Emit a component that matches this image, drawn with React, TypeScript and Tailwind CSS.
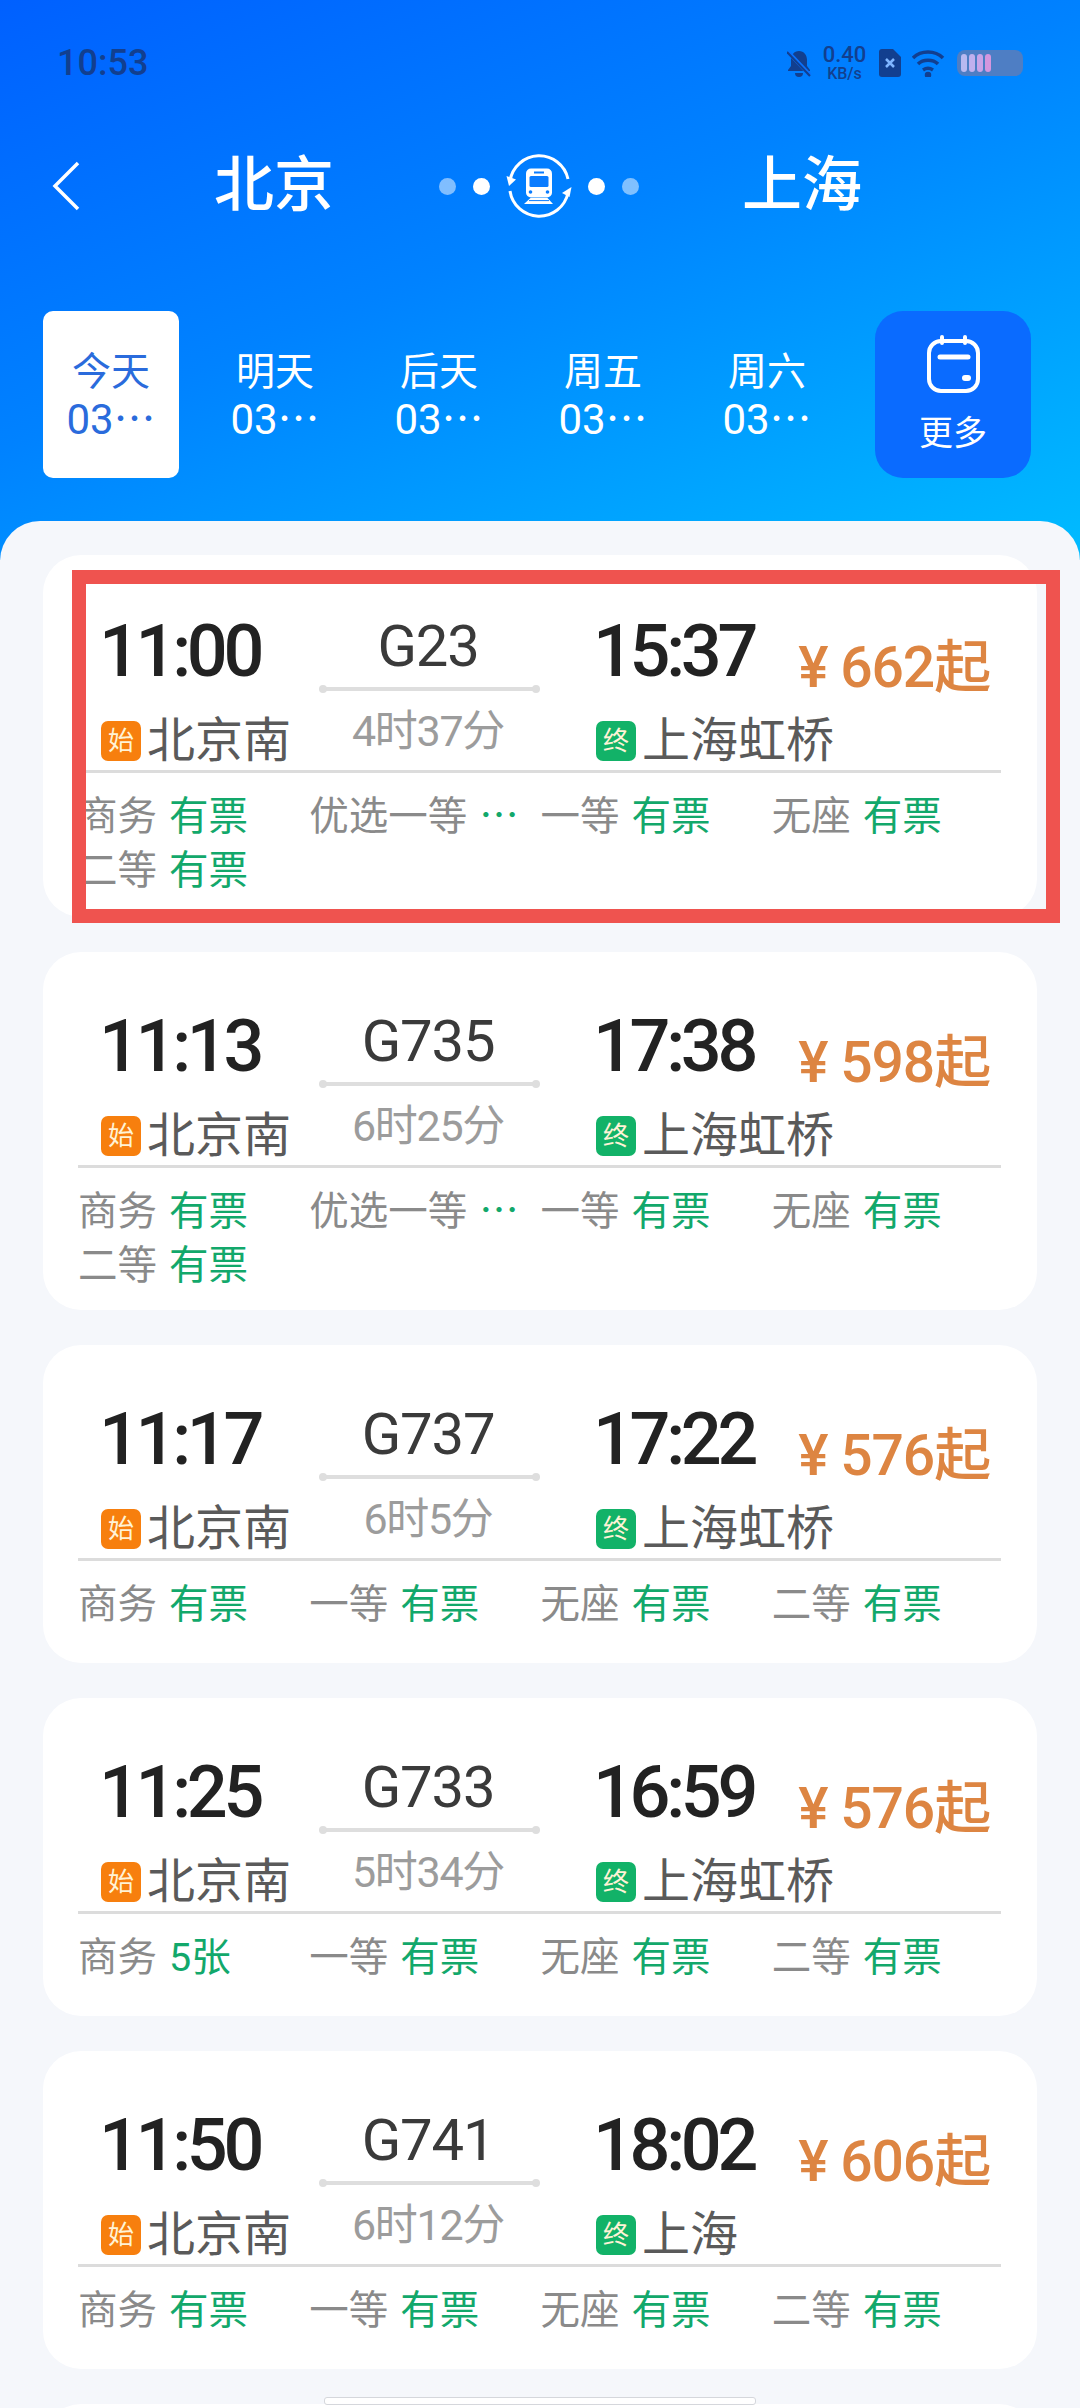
const dates = [
  { day: "今天", active: true },
  { day: "明天" },
  { day: "后天" },
  { day: "周五" },
  { day: "周六" },
];

const fourSeats = (first = "有票") => [
  { name: "商务", value: first },
  { name: "一等", value: "有票" },
  { name: "无座", value: "有票" },
  { name: "二等", value: "有票" },
];

const fiveSeats = [
  { name: "商务", value: "有票" },
  { name: "优选一等", value: "⋯" },
  { name: "一等", value: "有票" },
  { name: "无座", value: "有票" },
  { name: "二等", value: "有票" },
];

const trains = [
  { depart: "11:00", arrive: "15:37", code: "G23", duration: "4时37分", to: "上海虹桥", price: "662", seats: fiveSeats },
  { depart: "11:13", arrive: "17:38", code: "G735", duration: "6时25分", to: "上海虹桥", price: "598", seats: fiveSeats },
  { depart: "11:17", arrive: "17:22", code: "G737", duration: "6时5分", to: "上海虹桥", price: "576", seats: fourSeats() },
  { depart: "11:25", arrive: "16:59", code: "G733", duration: "5时34分", to: "上海虹桥", price: "576", seats: fourSeats("5张") },
  { depart: "11:50", arrive: "18:02", code: "G741", duration: "6时12分", to: "上海", price: "606", seats: fourSeats() },
];

function StatusIcons() {
  return (
    <div className="flex items-center text-[#123f8f]">
      <svg width="24" height="27" viewBox="0 0 24 27" fill="currentColor">
        <path d="M12 1c5 0 8 4 8 9v6l3 4v1H1v-1l3-4v-6c0-5 3-9 8-9z" />
        <path d="M8 23h8a4 4 0 0 1-8 0z" />
        <path d="M1 2l22 23" stroke="#0a72ff" strokeWidth="4" />
        <path d="M0 2l23 24" stroke="currentColor" strokeWidth="2" />
      </svg>
      <div className="ml-[10px] flex w-[47px] flex-col items-center font-medium">
        <span className="text-[22px] leading-[21px]">0.40</span>
        <span className="text-[16px] leading-[18px]">KB/s</span>
      </div>
      <svg className="ml-[11px]" width="22" height="28" viewBox="0 0 22 28" fill="currentColor">
        <path d="M3 0h11l8 8v17a3 3 0 0 1-3 3H3a3 3 0 0 1-3-3V3a3 3 0 0 1 3-3z" />
        <path d="M7 10l8 8M15 10l-8 8" stroke="#7fb6ff" strokeWidth="2.5" />
      </svg>
      <svg className="ml-[11px]" width="33" height="27" viewBox="0 0 33 27" fill="none" stroke="currentColor" strokeWidth="3.5">
        <path d="M1 8c8-8 22-8 30 0" />
        <path d="M6 14c5-5 15-5 20 0" />
        <path d="M11 20c3-2 7-2 10 0" />
        <circle cx="16" cy="25" r="1.5" fill="currentColor" />
      </svg>
      <div className="ml-[12px] flex h-[26px] w-[66px] items-center gap-[2px] rounded-[8px] bg-[#4e7ec4] px-[4px]">
        <span className="h-[18px] w-[6px] rounded-[3px] bg-[#b9b9f0]" />
        <span className="h-[18px] w-[6px] rounded-[3px] bg-[#c0b0ee]" />
        <span className="h-[18px] w-[6px] rounded-[3px] bg-[#c8a4e8]" />
        <span className="h-[18px] w-[6px] rounded-[3px] bg-[#d596de]" />
      </div>
    </div>
  );
}

function TrainSwapIcon() {
  return (
    <svg width="66" height="66" viewBox="0 0 66 66" fill="none" className="overflow-visible">
      <path d="M4 28A29.5 29.5 0 0 1 62 26" stroke="#fff" strokeWidth="3" />
      <path d="M4 38A29.5 29.5 0 0 0 62 40" stroke="#fff" strokeWidth="3" />
      <path d="M0.5 23L10 26.5L3 33Z" fill="#fff" />
      <path d="M65.5 34L56 40L63.5 44Z" fill="#fff" />
      <rect x="20" y="15.5" width="26" height="29" rx="5" fill="#fff" />
      <rect x="23.5" y="23" width="19" height="11" rx="1.5" fill="#0a7cff" />
      <rect x="28" y="18.5" width="10" height="2" fill="#0a7cff" />
      <circle cx="24.5" cy="39" r="1.8" fill="#0a7cff" />
      <circle cx="41.5" cy="39" r="1.8" fill="#0a7cff" />
      <path d="M24.5 45H41.5L47 51H18Z" fill="#fff" />
      <path d="M23 47.6H43" stroke="#0a7cff" strokeWidth="1" />
    </svg>
  );
}

function CalendarIcon() {
  return (
    <svg width="53" height="58" viewBox="0 0 53 58" fill="none" stroke="#fff" strokeLinecap="round">
      <rect x="2" y="6" width="49" height="50" rx="12" strokeWidth="4" />
      <path d="M15 2V8M38 2V8" strokeWidth="4" />
      <path d="M13 22H41" strokeWidth="5" />
      <path d="M38 43H41" strokeWidth="6" />
    </svg>
  );
}

function Badge({ label, tone }: { label: string; tone: string }) {
  return (
    <span className={`flex h-[40px] w-[40px] shrink-0 items-center justify-center rounded-[7px] text-[26px] leading-none text-[#fff3d6] ${tone}`}>
      {label}
    </span>
  );
}

function TrainCard({ train }: { train: (typeof trains)[number] }) {
  return (
    <div className="min-h-[318px] rounded-[38px] bg-white pb-[17px] first:min-h-[362px] first:pt-[2px]">
      <div className="flex h-[213px] pl-[58px] pr-[47px]">
        <div className="w-[219px] pt-[55px]">
          <div className="-ml-[2px] text-[72px] font-medium leading-[80px] tracking-[-0.06em] text-[#222]">{train.depart}</div>
          <div className="mt-[19px] flex h-[60px] items-center gap-[6px]">
            <Badge label="始" tone="bg-[#f77f0e]" />
            <span className="text-[48px] leading-[60px] text-[#5a5a5a]">北京南</span>
          </div>
        </div>
        <div className="flex w-[219px] flex-col items-center pt-[57px]">
          <div className="mr-[3px] text-[58px] leading-[64px] tracking-[-0.02em] text-[#3a3a3a]">{train.code}</div>
          <div className="relative mt-[9px] h-[4px] w-full bg-[#dedede]">
            <span className="absolute -left-[1px] -top-[2px] h-[8px] w-[8px] rounded-full bg-[#dedede]" />
            <span className="absolute -right-[1px] -top-[2px] h-[8px] w-[8px] rounded-full bg-[#dedede]" />
          </div>
          <div className="mr-[3px] mt-[15px] whitespace-nowrap text-[43px] leading-[50px] tracking-[-0.03em] text-[#9c9c9c]">{train.duration}</div>
        </div>
        <div className="ml-[57px] w-[200px] pt-[55px]">
          <div className="-ml-[3px] text-[72px] font-medium leading-[80px] tracking-[-0.06em] text-[#222]">{train.arrive}</div>
          <div className="mt-[19px] flex h-[60px] items-center gap-[6px]">
            <Badge label="终" tone="bg-[#12b268]" />
            <span className="whitespace-nowrap text-[48px] leading-[60px] text-[#5a5a5a]">{train.to}</span>
          </div>
        </div>
        <div className="ml-auto whitespace-nowrap pt-[75px] text-[57px] font-medium leading-[72px] tracking-[-0.02em] text-[#dd8542]">
          ¥ {train.price}起
        </div>
      </div>
      <div className="ml-[35px] h-[3px] w-[923px] bg-[#dcdcdc]" />
      <div className="ml-[35px] grid w-[925px] grid-cols-4 pt-[17px]">
        {train.seats.map((seat) => (
          <div key={seat.name} className="flex h-[54px] items-center gap-[12px] whitespace-nowrap text-[39.5px] leading-[54px]">
            <span className="text-[#8a8a8a]">{seat.name}</span>
            <span className="text-[#12a86b]">{seat.value}</span>
          </div>
        ))}
      </div>
    </div>
  );
}

export default function App() {
  return (
    <main className="relative h-[2408px] w-[1080px] overflow-hidden bg-[#f5f7fb] font-[Roboto,'Noto_Sans_CJK_SC',sans-serif]">
      <header className="h-[560px] bg-[linear-gradient(158deg,#0060ff_0%,#0082ff_45%,#00bcff_100%)] pt-[43px]">
        <div className="flex h-[40px] items-center justify-between px-[57px]">
          <span className="text-[36px] font-medium leading-[36px] text-[#123f8f]">10:53</span>
          <StatusIcons />
        </div>

        <div className="mt-[73px] flex h-[60px] items-center pl-[52px]">
          <svg width="28" height="50" viewBox="0 0 28 50" fill="none" stroke="#fff" strokeWidth="3.5">
            <path d="M26 2L3 25L26 48" />
          </svg>
          <span className="ml-[134px] text-[60px] font-medium leading-[60px] text-white">北京</span>
          <div className="ml-[105px] flex items-center">
            <span className="h-[17px] w-[17px] rounded-full bg-white/50" />
            <span className="ml-[17px] h-[17px] w-[17px] rounded-full bg-white" />
            <span className="ml-[16px] flex w-[66px]"><TrainSwapIcon /></span>
            <span className="ml-[16px] h-[17px] w-[17px] rounded-full bg-white" />
            <span className="ml-[17px] h-[17px] w-[17px] rounded-full bg-white/50" />
          </div>
          <span className="ml-[103px] text-[60px] font-medium leading-[60px] text-white">上海</span>
        </div>

        <div className="mt-[95px] flex pl-[43px]">
          <div className="flex w-[792px] gap-[28px]">
            {dates.map((item) => (
              <div
                key={item.day}
                className={`flex h-[167px] w-[136px] flex-col items-center justify-center rounded-[10px] pt-[3px] text-[39px] leading-[48px] ${
                  item.active ? "bg-white text-[#2a6bdc]" : "text-white"
                }`}
              >
                <span>{item.day}</span>
                <span className="text-[42px]">03⋯</span>
              </div>
            ))}
          </div>
          <div className="ml-[40px] flex h-[167px] w-[156px] flex-col items-center rounded-[28px] bg-[#0a6bff] pt-[24px] text-white">
            <CalendarIcon />
            <span className="mt-[18px] text-[34px] leading-[44px]">更多</span>
          </div>
        </div>
      </header>

      <section className="-mt-[39px] flex flex-col gap-[35px] rounded-t-[40px] bg-[#f5f7fb] pl-[43px] pr-[43px] pt-[34px]">
        {trains.map((train) => (
          <TrainCard key={train.code} train={train} />
        ))}
        <div className="h-[60px] rounded-t-[38px] bg-white" />
      </section>

      {/* annotation box drawn over the first card */}
      <div className="absolute left-[72px] top-[570px] h-[353px] w-[988px] border-[14px] border-[#ef534f]" />
      <div className="absolute left-[324px] top-[2397px] h-[8px] w-[432px] rounded-[3px] border border-[#d5d7dc] bg-white" />
    </main>
  );
}
